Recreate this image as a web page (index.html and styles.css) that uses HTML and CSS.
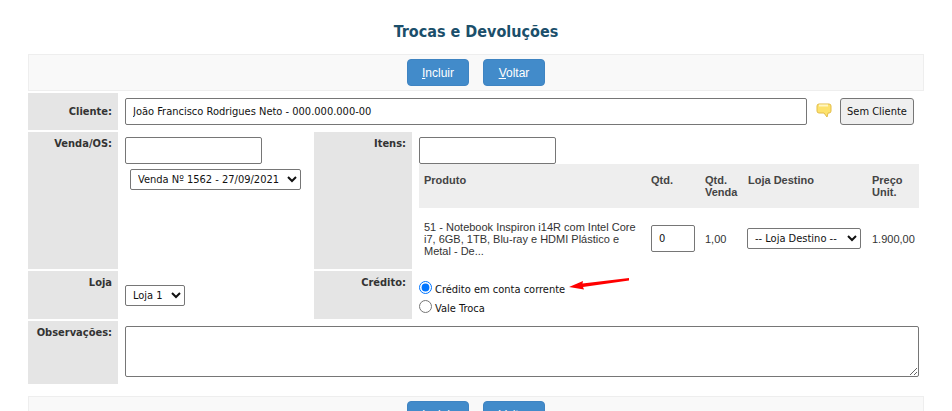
FILE: index.html
```html
<!DOCTYPE html>
<html lang="pt-br">
<head>
    <meta charset="UTF-8">
    <meta name="viewport" content="width=device-width, initial-scale=1.0">
    <title>Trocas e Devoluções</title>
    <link rel="stylesheet" href="styles.css">
</head>
<body>
    <div class="container">
        <h1>Trocas e Devoluções</h1>
        <div class="toolbar">
            <button type="button" class="btn"><u>I</u>ncluir</button>
            <button type="button" class="btn"><u>V</u>oltar</button>
        </div>
        <form class="grid">
            <label class="rotulo rotulo-cliente">Cliente:</label>
            <div class="campo campo-cliente">
                <input type="text" class="input-cliente" value="João Francisco Rodrigues Neto - 000.000.000-00">
                <svg class="balao" width="16" height="15" viewBox="0 0 16 15">
                    <path d="M3 1h10a2 2 0 0 1 2 2v5a2 2 0 0 1-2 2h-1l-1 4-3-4H3a2 2 0 0 1-2-2V3a2 2 0 0 1 2-2z" fill="#fde26c" stroke="#e3bd4a"/>
                    <path d="M3 2.500h9" stroke="#fff6c4" stroke-width="2"/>
                </svg>
                <button type="button" class="btn-cinza">Sem Cliente</button>
            </div>

            <label class="rotulo">Venda/OS:</label>
            <div class="campo">
                <input type="text" class="input-busca">
                <select class="select-venda">
                    <option>Venda Nº 1562 - 27/09/2021</option>
                </select>
            </div>
            <label class="rotulo">Itens:</label>
            <div class="campo campo-itens">
                <input type="text" class="input-busca">
                <table class="tabela">
                    <colgroup>
                        <col class="col-produto">
                        <col class="col-qtd">
                        <col class="col-venda">
                        <col class="col-loja">
                        <col>
                    </colgroup>
                    <thead>
                        <tr>
                            <th>Produto</th>
                            <th>Qtd.</th>
                            <th>Qtd. Venda</th>
                            <th>Loja Destino</th>
                            <th>Preço Unit.</th>
                        </tr>
                    </thead>
                    <tbody>
                        <tr>
                            <td>51 - Notebook Inspiron i14R com Intel Core i7, 6GB, 1TB, Blu-ray e HDMI Plástico e Metal - De...</td>
                            <td><input type="text" class="input-qtd" value="0"></td>
                            <td>1,00</td>
                            <td>
                                <select class="select-destino">
                                    <option>-- Loja Destino --</option>
                                </select>
                            </td>
                            <td>1.900,00</td>
                        </tr>
                    </tbody>
                </table>
            </div>

            <label class="rotulo">Loja</label>
            <div class="campo campo-loja">
                <select class="select-loja">
                    <option>Loja 1</option>
                </select>
            </div>
            <label class="rotulo">Crédito:</label>
            <div class="campo campo-credito">
                <label class="opcao"><input type="radio" name="credito" checked>Crédito em conta corrente</label>
                <label class="opcao"><input type="radio" name="credito">Vale Troca</label>
                <svg class="seta" width="62" height="12" viewBox="0 0 62 12">
                    <path d="M1 9L15 3L14.500 5.500L61 0V2.500L15 9L16 11.500z" fill="#f00"/>
                </svg>
            </div>

            <label class="rotulo">Observações:</label>
            <div class="campo campo-obs">
                <textarea class="obs"></textarea>
            </div>
        </form>
        <div class="toolbar toolbar-baixo">
            <button type="button" class="btn"><u>I</u>ncluir</button>
            <button type="button" class="btn"><u>V</u>oltar</button>
        </div>
    </div>
</body>
</html>
```

FILE: styles.css
```css
html, body {
    margin: 0;
    padding: 0;
    height: 100%;
    overflow: hidden;
    background-color: #fff;
}

body {
    font-family: "DejaVu Sans Condensed", "DejaVu Sans", sans-serif;
    font-stretch: condensed;
    font-size: 11px;
    color: #333;
}

.container {
    padding: 0 28px;
}

h1 {
    margin: 0;
    padding-top: 22px;
    box-sizing: border-box;
    height: 54px;
    text-align: center;
    font-size: 16px;
    line-height: 20px;
    color: #1b4f6b;
}

.toolbar {
    display: flex;
    justify-content: center;
    gap: 14px;
    box-sizing: border-box;
    height: 37px;
    padding-top: 4px;
    background-color: #f9f9f9;
    border: 1px solid #eee;
}

.toolbar-baixo {
    margin-top: 12px;
}

.btn {
    width: 62px;
    height: 27px;
    padding: 0;
    border: 1px solid #3f84c2;
    border-radius: 4px;
    background-color: #428bca;
    color: #fff;
    font-family: "Liberation Sans", sans-serif;
    font-size: 12px;
}

.grid {
    display: grid;
    grid-template-columns: 90px 196px 98px 512px;
    grid-template-rows: 37px 137px 48px 63px;
    row-gap: 2px;
    margin-top: 2px;
}

.rotulo {
    box-sizing: border-box;
    padding: 5px 6px 0 0;
    background-color: #e5e5e5;
    text-align: right;
    font-weight: bold;
    font-size: 11px;
    line-height: 14px;
    color: #333;
}

.rotulo-cliente {
    padding-top: 12px;
}

.campo {
    box-sizing: border-box;
    padding: 5px 5px 0 7px;
}

.campo-cliente {
    grid-column: 2 / 5;
    display: flex;
    align-items: flex-start;
    padding-right: 10px;
}

input[type="text"], select, textarea, .btn-cinza {
    box-sizing: border-box;
    font-family: "DejaVu Sans Condensed", "DejaVu Sans", sans-serif;
    font-stretch: condensed;
    font-size: 11px;
    color: #111;
}

input[type="text"], textarea {
    border: 1px solid #767676;
    border-radius: 2px;
    background-color: #fff;
    margin: 0;
}

select {
    display: block;
    height: 21px;
    padding-left: 3px;
    background-color: #fff;
    border: 1px solid #767676;
    border-radius: 2px;
}

.input-cliente {
    flex: 1;
    height: 27px;
    padding: 0 7px;
}

.balao {
    flex: none;
    margin: 5px 8px 0 9px;
}

.btn-cinza {
    flex: none;
    width: 74px;
    height: 27px;
    padding: 0;
    border: 1px solid #767676;
    border-radius: 3px;
    background-color: #efefef;
}

.input-busca {
    display: block;
    width: 137px;
    height: 27px;
}

.select-venda {
    width: 171px;
    margin: 5px 0 0 5px;
}

.tabela {
    width: 500px;
    table-layout: fixed;
    border-collapse: collapse;
    font-family: "Liberation Sans", sans-serif;
    font-stretch: normal;
    font-size: 11px;
    line-height: 12px;
}

.col-produto { width: 227px; }
.col-qtd { width: 54px; }
.col-venda { width: 43px; }
.col-loja { width: 124px; }

.tabela th {
    height: 44px;
    box-sizing: border-box;
    padding: 10px 5px 0;
    vertical-align: top;
    text-align: left;
    background-color: #eee;
    color: #444;
}

.tabela td {
    height: 61px;
    box-sizing: border-box;
    padding: 0 0 0 5px;
    color: #333;
}

.input-qtd {
    display: block;
    width: 44px;
    height: 27px;
    padding: 0 7px;
    font-size: 12px;
}

.select-destino {
    width: 114px;
    margin-left: -1px;
}

.campo-loja {
    padding-top: 14px;
}

.select-loja {
    width: 60px;
}

.campo-credito {
    position: relative;
    padding-top: 9px;
}

.opcao {
    display: flex;
    align-items: center;
    height: 19px;
    color: #111;
}

.opcao input {
    width: 13px;
    height: 13px;
    margin: 0 3px 5px 0;
}

.seta {
    position: absolute;
    left: 156px;
    top: 7px;
}

.campo-obs {
    grid-column: 2 / 5;
}

.obs {
    display: block;
    width: 794px;
    height: 51px;
}
```
